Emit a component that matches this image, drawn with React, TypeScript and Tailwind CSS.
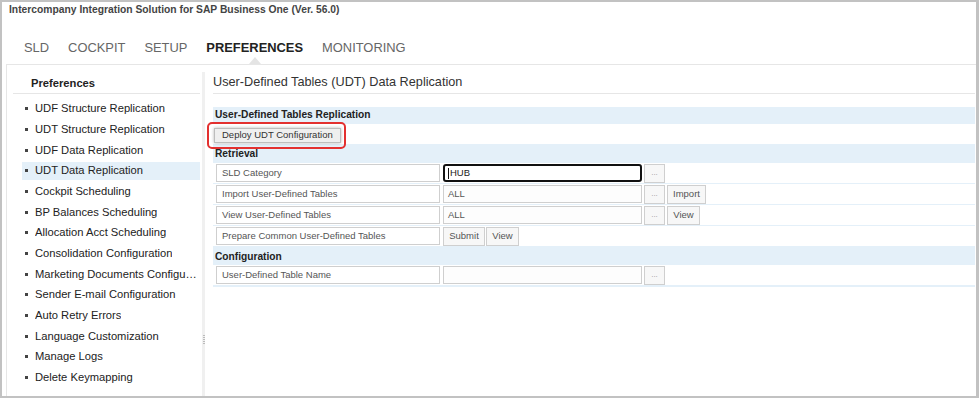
import React from "react";

const items = [
  "UDF Structure Replication",
  "UDT Structure Replication",
  "UDF Data Replication",
  "UDT Data Replication",
  "Cockpit Scheduling",
  "BP Balances Scheduling",
  "Allocation Acct Scheduling",
  "Consolidation Configuration",
  "Marketing Documents Configuration",
  "Sender E-mail Configuration",
  "Auto Retry Errors",
  "Language Customization",
  "Manage Logs",
  "Delete Keymapping",
];

const tabs = ["SLD", "COCKPIT", "SETUP", "PREFERENCES", "MONITORING"];

function Label({ text }: { text: string }) {
  return (
    <div className="w-[224px] h-[18px] border border-[#cfcfcf] bg-white flex items-center pl-[5px] text-[9.5px] text-[#555] leading-none whitespace-nowrap">
      {text}
    </div>
  );
}

function Input({ value, focused }: { value: string; focused?: boolean }) {
  return (
    <div
      className={
        focused
          ? "ml-[3px] w-[199px] h-[18px] border-2 border-[#111] rounded-[3px] bg-white flex items-center pl-[3px] text-[9.5px] text-[#222] leading-none"
          : "ml-[3px] w-[199px] h-[18px] border border-[#cfcfcf] bg-[#fdfdfd] flex items-center pl-[4px] text-[9.5px] text-[#555] leading-none"
      }
    >
      {focused && <span className="w-px h-[11px] bg-[#111] mr-[1px]" />}
      {value}
    </div>
  );
}

function Btn({ text, w, ml }: { text: string; w: string; ml: string }) {
  return (
    <div
      className={`${w} ${ml} h-[19px] border border-[#cfcfcf] bg-[#f7f7f7] flex items-center justify-center text-[9.5px] text-[#555] leading-none`}
    >
      {text}
    </div>
  );
}

function Dots() {
  return (
    <div className="ml-[2px] w-[21px] h-[19px] border border-[#cfcfcf] bg-[#f7f7f7] flex items-end justify-center pb-[5px] text-[8px] text-[#999] leading-none">
      ...
    </div>
  );
}

function Row({ children, mt = "mt-[1px]" }: { children: React.ReactNode; mt?: string }) {
  return <div className={`${mt} h-[20px] bg-white flex items-center pl-[3px]`}>{children}</div>;
}

export default function App() {
  return (
    <div className="w-[979px] h-[398px] bg-white border-t-2 border-l-2 border-r-[3px] border-b-2 border-[#c2c2c2] flex flex-col overflow-hidden font-['Liberation_Sans',Arial,sans-serif]">
      {/* header */}
      <div className="h-[62px] relative flex flex-col">
        <div className="pt-[2px] pl-[7px] leading-[12px] text-[10.3px] font-bold text-[#444]">
          Intercompany Integration Solution for SAP Business One (Ver. 56.0)
        </div>
        <div className="mt-[24px] pl-[22px] flex gap-[19px] leading-[16px] text-[12.9px]">
          {tabs.map((t) => (
            <span
              key={t}
              className={t === "PREFERENCES" ? "font-bold text-[#222]" : "text-[#666]"}
            >
              {t}
            </span>
          ))}
        </div>
        <div className="absolute left-[247px] bottom-0 w-0 h-0 border-l-[6px] border-r-[6px] border-b-[7px] border-l-transparent border-r-transparent border-b-[#e4e4e4]" />
      </div>

      {/* content */}
      <div className="flex-1 flex ml-[4px] border-t border-l border-[#e6e6e6] min-h-0">
        {/* left panel */}
        <div className="w-[195px] flex flex-col">
          <div className="ml-[6px] mr-[2px] h-[29px] border-b border-[#e6e6e6] flex items-end pb-[3px] pl-[18px] leading-[13px] text-[11.2px] font-bold text-[#222]">
            Preferences
          </div>
          <div className="mt-[4.4px] ml-[15px] mr-[2px] flex flex-col">
            {items.map((it) => (
              <div key={it} className="h-[20.7px] flex items-center">
                <div
                  className={`w-full h-[18px] flex items-center pl-[3px] ${
                    it === "UDT Data Replication" ? "bg-[#e4f0f9]" : ""
                  }`}
                >
                  <span className="w-[3px] h-[3px] bg-[#444] shrink-0" />
                  <span className="ml-[7px] text-[11.2px] text-[#222] leading-none whitespace-nowrap overflow-hidden text-ellipsis">
                    {it}
                  </span>
                </div>
              </div>
            ))}
          </div>
        </div>

        {/* separator */}
        <div className="mt-[7px] w-[3px] bg-[#f0f0f0] flex flex-col items-center">
          <div className="mt-[263px] flex flex-col gap-[1px]">
            {[0, 1, 2, 3, 4].map((i) => (
              <div key={i} className="w-[2px] h-[1px] bg-[#bbb]" />
            ))}
          </div>
        </div>

        {/* main */}
        <div className="flex-1 pl-[8px] pr-[1px] flex flex-col">
          <div className="h-[29px] border-b border-[#e6e6e6] flex items-end pb-[3px] leading-[15px] text-[12.7px] text-[#333]">
            User-Defined Tables (UDT) Data Replication
          </div>
          <div className="mt-[13px] bg-[#e4f0f9] flex flex-col pb-[2px]">
            <div className="h-[17px] flex items-center pl-[2px] text-[10.2px] font-bold text-[#222] leading-none">
              User-Defined Tables Replication
            </div>
            <div className="h-[20px] bg-white flex items-start pt-[3.5px] pl-[1px]">
              <div className="relative">
                <div className="h-[15px] border border-[#bdbdbd] bg-[#efefef] flex items-center px-[7px] text-[9.5px] text-[#333] leading-none whitespace-nowrap shadow-[0_0_3px_rgba(0,0,0,0.3)]">
                  Deploy UDT Configuration
                </div>
                <div className="absolute left-[-7px] top-[-6px] right-[-5px] bottom-[-6px] border-2 border-[#e3302f] rounded-[5px]" />
              </div>
            </div>
            <div className="h-[18px] flex items-end pb-[3px] pl-[2px] text-[10.2px] font-bold text-[#222] leading-none">
              Retrieval
            </div>
            <Row>
              <Label text="SLD Category" />
              <Input value="HUB" focused />
              <Dots />
            </Row>
            <Row>
              <Label text="Import User-Defined Tables" />
              <Input value="ALL" />
              <Dots />
              <Btn text="Import" w="w-[39px]" ml="ml-[2px]" />
            </Row>
            <Row>
              <Label text="View User-Defined Tables" />
              <Input value="ALL" />
              <Dots />
              <Btn text="View" w="w-[33px]" ml="ml-[2px]" />
            </Row>
            <Row>
              <Label text="Prepare Common User-Defined Tables" />
              <Btn text="Submit" w="w-[42px]" ml="ml-[3px]" />
              <Btn text="View" w="w-[33px]" ml="ml-[1px]" />
            </Row>
            <div className="h-[19px] flex items-end pb-[3px] pl-[2px] text-[10.2px] font-bold text-[#222] leading-none">
              Configuration
            </div>
            <Row mt="mt-0">
              <Label text="User-Defined Table Name" />
              <Input value="" />
              <Dots />
            </Row>
          </div>
        </div>
      </div>
    </div>
  );
}
